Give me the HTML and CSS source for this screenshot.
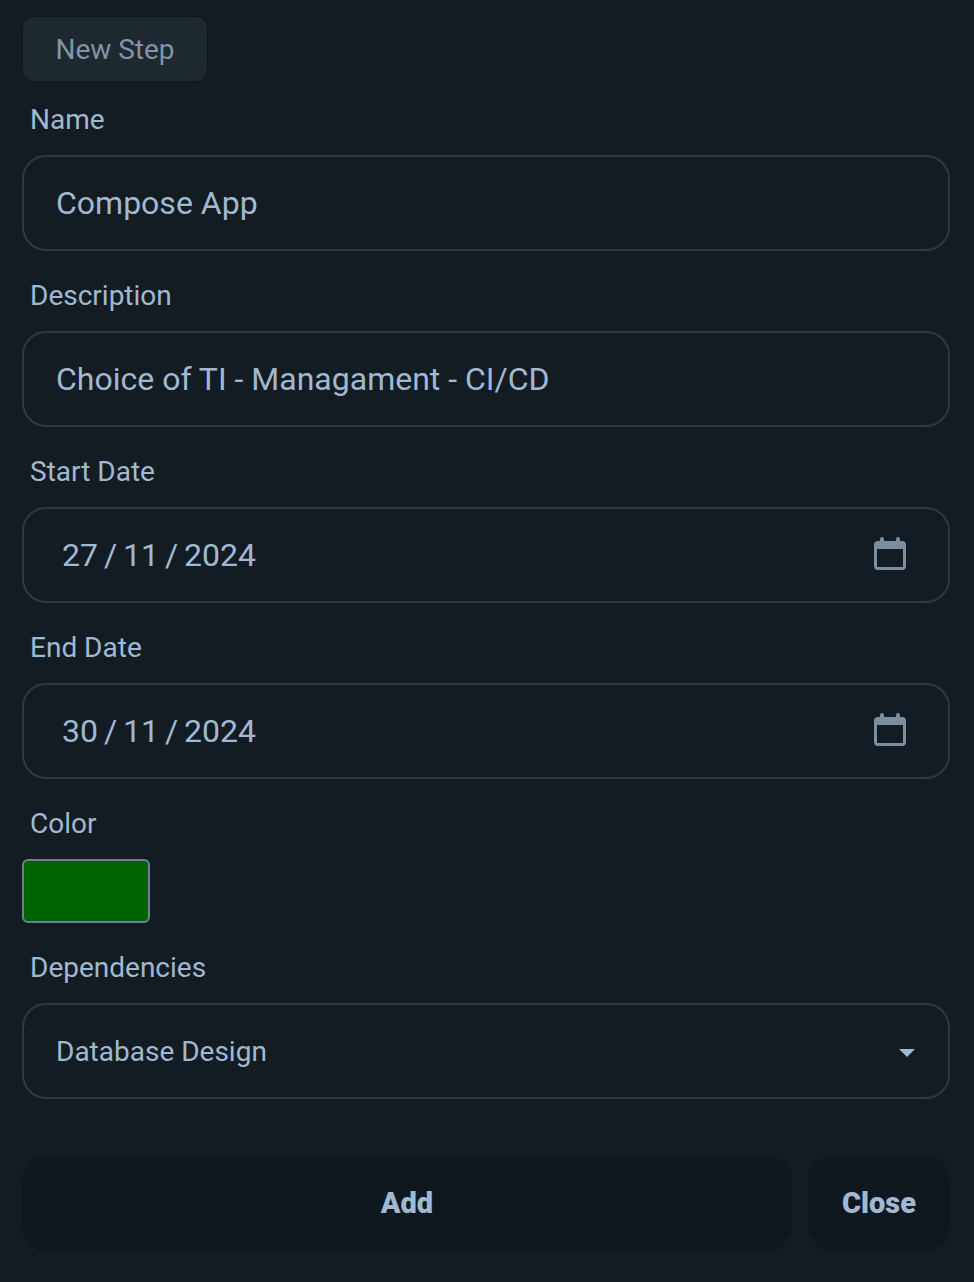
FILE: index.html
```
<!DOCTYPE html>
<html lang="en">
<head>
<meta charset="utf-8">
<title>New Step</title>
<link rel="stylesheet" href="styles.css">
</head>
<body>
<form class="form">
  <div class="tab">New Step</div>
  <label class="label label-first">Name</label>
  <div class="field"><span class="value">Compose App</span></div>
  <label class="label">Description</label>
  <div class="field"><span class="value">Choice of TI - Managament - CI/CD</span></div>
  <label class="label">Start Date</label>
  <div class="field field-date"><span class="value value-date">27 / 11 / 2024</span>
    <svg class="cal" viewBox="0 0 32 33" width="32" height="33"><path class="cal-shape" fill-rule="evenodd" d="M8 0a2 2 0 0 1 2 2V4h12V2a2 2 0 0 1 4 0V4h2a4 4 0 0 1 4 4v21a4 4 0 0 1-4 4H4a4 4 0 0 1-4-4V8a4 4 0 0 1 4-4h2V2a2 2 0 0 1 2-2zM3 12v17a1 1 0 0 0 1 1h24a1 1 0 0 0 1-1V12z"/></svg>
  </div>
  <label class="label">End Date</label>
  <div class="field field-date"><span class="value value-date">30 / 11 / 2024</span>
    <svg class="cal" viewBox="0 0 32 33" width="32" height="33"><path class="cal-shape" fill-rule="evenodd" d="M8 0a2 2 0 0 1 2 2V4h12V2a2 2 0 0 1 4 0V4h2a4 4 0 0 1 4 4v21a4 4 0 0 1-4 4H4a4 4 0 0 1-4-4V8a4 4 0 0 1 4-4h2V2a2 2 0 0 1 2-2zM3 12v17a1 1 0 0 0 1 1h24a1 1 0 0 0 1-1V12z"/></svg>
  </div>
  <label class="label">Color</label>
  <div class="swatch"></div>
  <label class="label">Dependencies</label>
  <div class="field field-select"><span class="value-sm">Database Design</span><span class="caret"></span></div>
  <div class="actions">
    <button type="button" class="btn btn-add">Add</button>
    <button type="button" class="btn btn-close">Close</button>
  </div>
</form>
</body>
</html>
```
FILE: styles.css
```
* { box-sizing: border-box; }
html, body { margin: 0; padding: 0; }
body {
  background: #141c23;
  color: #a0b9d1;
  font-family: Roboto, "Liberation Sans", sans-serif;
  width: 974px;
  height: 1282px;
  overflow: hidden;
}
.form {
  display: flex;
  flex-direction: column;
  align-items: stretch;
  padding: 16px 24px 0 22px;
}
.tab {
  align-self: flex-start;
  width: 186px;
  height: 66px;
  border: 1px solid #0f171d;
  border-radius: 12px;
  background: #1e282f;
  color: #8094a7;
  font-size: 28px;
  line-height: 66px;
  text-align: center;
}
.label {
  display: block;
  height: 40px;
  padding: 0 0 0 8px;
  font-size: 28px;
  line-height: 42px;
  color: #a0b9d1;
  margin-top: 24px;
  margin-bottom: 16px;
}
.label-first { margin-top: 17px; }
.field {
  display: flex;
  align-items: center;
  justify-content: space-between;
  height: 96px;
  border: 2px solid #2c3a46;
  border-radius: 24px;
  padding: 0 32px;
}
.value { font-size: 32px; color: #a0b9d1; }
.value-date { word-spacing: -2px; }
.field-date { padding: 0 42px 0 38px; }
.value-sm { font-size: 28px; color: #a0b9d1; }
.cal { display: block; margin-bottom: 4px; }
.cal-shape { fill: #7b8fa1; }
.field-select { padding-right: 33px; }
.caret {
  width: 0;
  height: 0;
  margin-top: 4px;
  border-left: 8px solid transparent;
  border-right: 8px solid transparent;
  border-top: 8px solid #a0b9d1;
}
.swatch {
  width: 128px;
  height: 64px;
  background: #006400;
  border: 2px solid #6e8090;
  border-radius: 6px;
}
.actions {
  display: flex;
  gap: 16px;
  margin-top: 56px;
}
.btn {
  height: 96px;
  border: 0;
  border-radius: 24px;
  background: #0f181f;
  color: #a0b9d1;
  font-family: inherit;
  font-size: 29px;
  font-weight: 900;
  padding: 0;
}
.btn-add { flex: 1; }
.btn-close { width: 142px; }
```
